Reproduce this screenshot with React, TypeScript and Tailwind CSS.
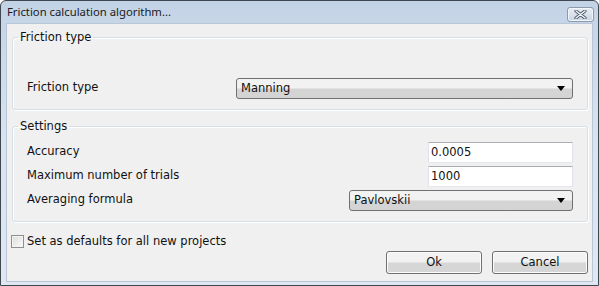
import React from "react";

const font = { fontFamily: '"DejaVu Sans", Verdana, sans-serif' };

const Arrow = () => (
  <svg width="8" height="5" viewBox="0 0 8 5" className="shrink-0">
    <path d="M0 0 H8 L4 5 Z" fill="#000" />
  </svg>
);

const Select = ({ value, className }: { value: string; className: string }) => (
  <div
    className={
      "flex h-[21px] items-center justify-between rounded-[3px] border border-[#707070] bg-gradient-to-b from-[#f2f2f2] from-45% to-[#d4d4d4] to-55% pl-[4px] pr-[7px] text-[11.5px] text-[#111] " +
      className
    }
  >
    <span>{value}</span>
    <Arrow />
  </div>
);

const Field = ({ value }: { value: string }) => (
  <div className="flex h-[21px] w-[145px] items-center border border-t-[#abadb3] border-x-[#e2e3ea] border-b-[#e3e9ef] bg-white pl-[2px] text-[11.5px] text-[#111]">
    {value}
  </div>
);

const Row = ({ label, children }: { label: string; children: React.ReactNode }) => (
  <div className="flex items-center justify-between">
    <span className="pb-[4px] text-[11.5px] leading-[16px] text-[#111]">{label}</span>
    {children}
  </div>
);

const Group = ({ title, className, children }: { title: string; className: string; children: React.ReactNode }) => (
  <fieldset className={"rounded-[3px] border border-[#d5dfe5] shadow-[inset_1px_1px_0_#fff,1px_1px_0_#fff] " + className}>
    <legend className="-ml-[9px] px-[2px] text-[11.5px] leading-[14px] text-[#111]">{title}</legend>
    {children}
  </fieldset>
);

export default function App() {
  return (
    <div
      style={font}
      className="flex h-[286px] w-[599px] flex-col overflow-hidden rounded-t-[6px] border border-[#3f4750] bg-gradient-to-b from-[#c3d3e6] via-[#d9e4f1] to-[#dfe8f2]"
    >
      <div className="flex h-[22px] shrink-0 items-center justify-between pl-[6px] pr-[4px]">
        <span className="pt-[1px] text-[11.3px] text-[#1a1a1a]" style={{ fontFamily: '"Noto Sans", "Open Sans", sans-serif' }}>
          Friction calculation algorithm...
        </span>
        <div className="mt-[4px] flex h-[15px] w-[27px] items-center justify-center rounded-[3px] border border-[#8b9aac] bg-gradient-to-b from-[#e9eef5] to-[#c9d5e3] shadow-[inset_0_0_0_1px_#f2f5f9]">
          <svg width="13" height="9" viewBox="0 0 13 9">
            <path d="M2 1 L11 8 M11 1 L2 8" stroke="#4b5868" strokeWidth="3.2" strokeLinecap="round" />
            <path d="M2 1 L11 8 M11 1 L2 8" stroke="#f4f6f9" strokeWidth="1.4" strokeLinecap="round" />
          </svg>
        </div>
      </div>
      <div className="mx-[5px] mb-[3px] flex flex-1 flex-col border border-[#b9c6d5] bg-[#f0f0f0] pl-[4px] pr-[4px]">
        <Group title="Friction type" className="mt-[6px] ml-[1px] pb-[10px] pl-[14px] pr-[14px] pt-[34px]">
          <Row label="Friction type">
            <Select value="Manning" className="w-[337px]" />
          </Row>
        </Group>
        <Group title="Settings" className="mt-[9px] ml-[1px] pb-[10px] pl-[14px] pr-[14px] pt-[9px]">
          <div className="flex flex-col gap-[3px]">
            <Row label="Accuracy">
              <Field value="0.0005" />
            </Row>
            <Row label="Maximum number of trials">
              <Field value="1000" />
            </Row>
            <Row label="Averaging formula">
              <Select value="Pavlovskii" className="w-[224px]" />
            </Row>
          </div>
        </Group>
        <label className="mt-[11px] flex items-center gap-[3px]">
          <span className="h-[13px] w-[13px] border border-[#8f8f8f] bg-gradient-to-br from-[#dcdcdc] to-[#fbfbfb] shadow-[inset_0_0_0_1px_#f4f4f4]" />
          <span className="text-[11.5px] leading-[17px] text-[#111]">Set as defaults for all new projects</span>
        </label>
        <div className="mt-[1px] flex justify-end gap-[10px]">
          <button className="h-[23px] w-[96px] rounded-[3px] border border-[#707070] bg-gradient-to-b from-[#f2f2f2] from-45% to-[#d6d6d6] to-55% text-[11.5px] text-[#111] shadow-[inset_0_0_0_1px_#fcfcfc]">
            Ok
          </button>
          <button className="h-[23px] w-[96px] rounded-[3px] border border-[#707070] bg-gradient-to-b from-[#f2f2f2] from-45% to-[#d6d6d6] to-55% text-[11.5px] text-[#111] shadow-[inset_0_0_0_1px_#fcfcfc]">
            Cancel
          </button>
        </div>
      </div>
    </div>
  );
}
